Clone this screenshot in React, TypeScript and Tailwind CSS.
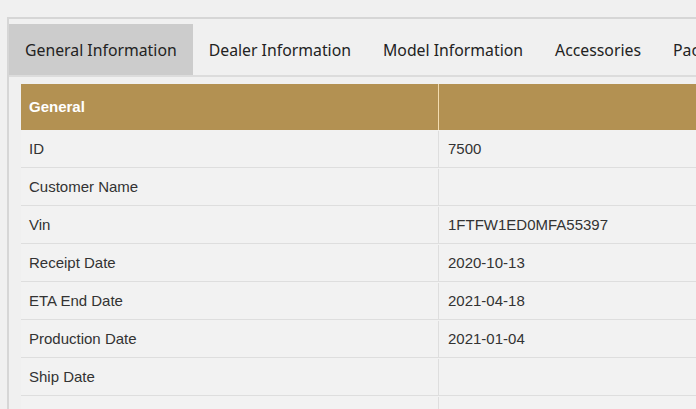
const tabs = ['General Information', 'Dealer Information', 'Model Information', 'Accessories', 'Packages'];

const rows: [string, string][] = [
  ['ID', '7500'],
  ['Customer Name', ''],
  ['Vin', '1FTFW1ED0MFA55397'],
  ['Receipt Date', '2020-10-13'],
  ['ETA End Date', '2021-04-18'],
  ['Production Date', '2021-01-04'],
  ['Ship Date', ''],
  ['', ''],
];

export default function App() {
  return (
    <div className="w-[696px] h-[409px] overflow-hidden bg-[#f0f0f0] pt-[17px] pl-[7px]">
      <div className="border-t-2 border-l-2 border-[#d6d6d6] w-[900px]">
        <div className="flex pt-[5px] border-b-2 border-[#dcdcdc] font-['Noto_Sans',sans-serif] text-[15.8px] text-[#222]">
          {tabs.map((t, i) => (
            <div
              key={t}
              className={
                i === 0
                  ? 'h-[51px] px-[16px] pt-[2px] flex items-center bg-[#cccccc] whitespace-nowrap'
                  : 'h-[51px] px-[16px] pt-[2px] flex items-center whitespace-nowrap'
              }
            >
              {t}
            </div>
          ))}
        </div>
        <div className="ml-[12px] mt-[7px] font-['Liberation_Sans',Arial,sans-serif] text-[15px] text-[#333]">
          <div className="flex h-[46px] bg-[#b39152] text-white font-bold">
            <div className="w-[418px] flex items-center px-[8px] border-r border-[#f3dcb0]">General</div>
            <div className="flex-1"></div>
          </div>
          {rows.map(([k, v], i) => (
            <div key={i} className="flex h-[38px] pt-px bg-[#f2f2f2] border-b border-[#dedede]">
              <div className="w-[418px] flex items-center px-[8px] border-r border-[#dedede]">{k}</div>
              <div className="flex-1 flex items-center px-[9px]">{v}</div>
            </div>
          ))}
        </div>
      </div>
    </div>
  );
}
